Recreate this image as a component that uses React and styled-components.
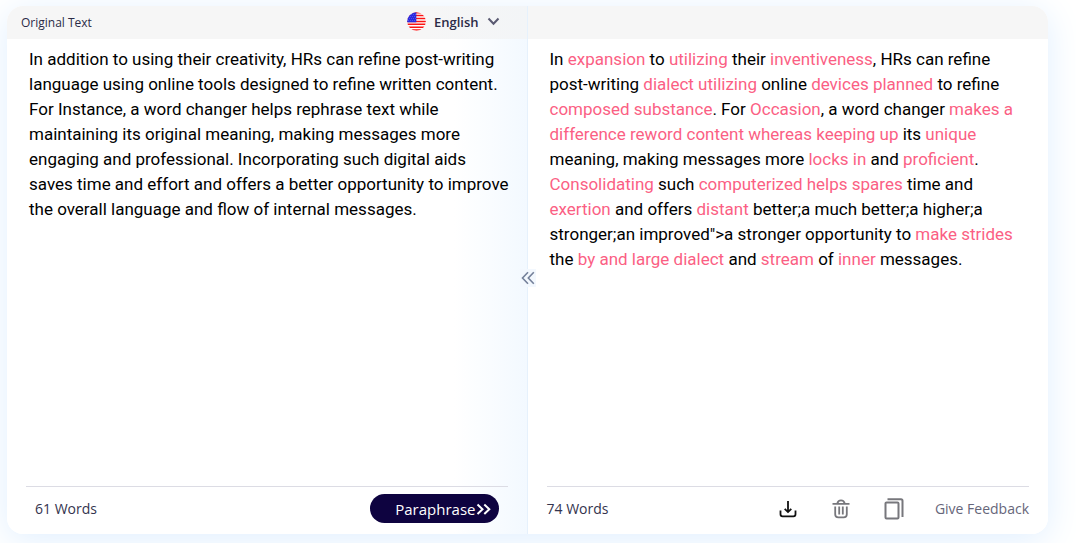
import React from "react";
import styled, { createGlobalStyle } from "styled-components";

const GlobalStyle = createGlobalStyle`
  *, *::before, *::after { box-sizing: border-box; }
  body {
    margin: 0;
    background: #fff;
    color: #1f1f3d;
    font-family: "Segoe UI", "Open Sans", sans-serif;
  }
`;

const Page = styled.main`
  display: flex;
  min-height: 100vh;
  padding: 6px 28px 9px 7px;
  overflow: hidden;
`;

const Card = styled.div`
  position: relative;
  display: grid;
  grid-template-columns: 1fr 1fr;
  flex: 1;
  border-radius: 16px;
  background: #fff;
  box-shadow: 0 6px 36px #e0efff;
`;

const Panel = styled.section`
  display: flex;
  flex-direction: column;
  min-width: 0;
  overflow: hidden;
  border-radius: ${(p) => (p.$side === "left" ? "16px 0 0 16px" : "0 16px 16px 0")};
  border-right: ${(p) => (p.$side === "left" ? "1px solid #e6f1fc" : "0")};
  background: ${(p) =>
    p.$side === "left"
      ? "linear-gradient(to right, #fff 86%, #f3f9ff 100%)"
      : "#fff"};
`;

const Header = styled.header`
  display: flex;
  align-items: center;
  justify-content: space-between;
  height: 33px;
  padding: 0 27px 0 14px;
  background: ${(p) =>
    p.$side === "left"
      ? "linear-gradient(to right, #f6f6f6 80%, #f3f5f7 100%)"
      : "#f6f6f6"};
  font-size: 13px;
`;

const Title = styled.label`
  color: #2b2b47;
  font-size: 12px;
`;

const LanguageButton = styled.button`
  display: flex;
  align-items: center;
  margin-top: -2px;
  padding: 0;
  border: 0;
  background: none;
  color: #2b2b47;
  font: 600 13px "Segoe UI", "Open Sans", sans-serif;
  cursor: pointer;
`;

const LanguageName = styled.span`
  margin: 0 8px;
`;

const SourceText = styled.textarea`
  flex: 1;
  width: 100%;
  padding: 8px 14px 0 22px;
  border: 0;
  outline: 0;
  resize: none;
  background: transparent;
  color: #000;
  font: 17px/25px Roboto, sans-serif;
`;

const ResultText = styled.p`
  flex: 1;
  margin: 0;
  padding: 8px 32px 0 22px;
  color: #000;
  font: 17px/25px Roboto, sans-serif;
`;

const Changed = styled.span`
  color: #fb5f84;
`;

const Footer = styled.footer`
  display: flex;
  align-items: center;
  justify-content: space-between;
  height: 48px;
  margin: 0 19px;
  padding: ${(p) => (p.$side === "left" ? "0 9px 4px" : "0 0 4px")};
  border-top: 1px solid #dcdce4;
`;

const WordCount = styled.span`
  color: #34344e;
  font-size: 14px;
`;

const ParaphraseButton = styled.button`
  display: flex;
  align-items: center;
  justify-content: flex-end;
  width: 129px;
  height: 29px;
  padding: 0 8px 0 0;
  border: 0;
  border-radius: 15px;
  background: #0e0340;
  color: #fff;
  font: 15px "Segoe UI", "Open Sans", sans-serif;
  cursor: pointer;
`;

const Actions = styled.div`
  display: flex;
  align-items: center;
  gap: 29px;
`;

const IconButton = styled.button`
  display: grid;
  place-items: center;
  width: 24px;
  height: 24px;
  padding: 0;
  border: 0;
  background: none;
  color: ${(p) => p.$color};
  cursor: pointer;
`;

const FeedbackLink = styled.a`
  color: #66667a;
  font-size: 14px;
  text-decoration: none;
`;

const CollapseButton = styled.button`
  position: absolute;
  top: calc(50% + 8px);
  left: 50%;
  display: grid;
  place-items: center;
  width: 16px;
  height: 18px;
  padding: 0;
  border: 0;
  background: #f3f8fe;
  color: #74809a;
  transform: translate(-50%, -50%);
  cursor: pointer;
`;

const Flag = () => (
  <svg width="19" height="19" viewBox="0 0 19 19" aria-hidden="true">
    <defs>
      <clipPath id="flag-circle">
        <circle cx="9.5" cy="9.5" r="9.3" />
      </clipPath>
    </defs>
    <g clipPath="url(#flag-circle)">
      <rect width="19" height="19" fill="#fff" />
      <path
        d="M0 .7h19M0 3.6h19M0 6.5h19M0 9.4h19M0 12.3h19M0 15.2h19M0 18.1h19"
        stroke="#fb1414"
        strokeWidth="1.5"
      />
      <rect width="9.3" height="10.3" fill="#2929df" />
      <path
        d="M2 2.5h7M1 4.5h8M2 6.5h7M1 8.5h8"
        stroke="#7272ee"
        strokeWidth=".7"
        strokeDasharray=".8 1.2"
      />
    </g>
  </svg>
);

const Chevron = () => (
  <svg width="13" height="9" viewBox="0 0 13 9" fill="none" aria-hidden="true">
    <path d="M1.5 1.5 6.5 6.7l5-5.2" stroke="#5a5a72" strokeWidth="2" />
  </svg>
);

const DoubleRight = () => (
  <svg width="15" height="12" viewBox="0 0 15 12" fill="none" aria-hidden="true">
    <path
      d="m1.5 1.5 5 4.7-5 4.7M8.3 1.5l5 4.7-5 4.7"
      stroke="currentColor"
      strokeWidth="2"
    />
  </svg>
);

const DoubleLeft = () => (
  <svg width="14" height="14" viewBox="0 0 14 14" fill="none" aria-hidden="true">
    <path
      d="M7 1.2 1.5 7 7 12.8M12.8 1.2 7.3 7l5.5 5.8"
      stroke="currentColor"
      strokeWidth="1.6"
    />
  </svg>
);

const Download = () => (
  <svg width="18" height="18" viewBox="0 0 18 18" fill="none" aria-hidden="true">
    <path
      d="M9 1v11M5.7 8.8 9 12.1l3.3-3.3M1.5 10.5v3.8a2 2 0 0 0 2 2h11a2 2 0 0 0 2-2v-3.8"
      stroke="currentColor"
      strokeWidth="1.8"
    />
  </svg>
);

const Trash = () => (
  <svg width="18" height="20" viewBox="0 0 18 20" fill="none" aria-hidden="true">
    <path
      d="M.5 4.9h17M5.3 4.5C5.7 2.6 7 1.3 9 1.3s3.3 1.3 3.7 3.2M3.2 7.5v7.7a3.2 3.2 0 0 0 3.2 3.2h5.2a3.2 3.2 0 0 0 3.2-3.2V7.5M7.2 7.5v8M10.8 7.5v8"
      stroke="currentColor"
      strokeWidth="1.8"
    />
  </svg>
);

const Copy = () => (
  <svg width="20" height="22" viewBox="0 0 20 22" fill="none" aria-hidden="true">
    <path
      d="M2.5 4.5h11a1 1 0 0 1 1 1v14a1 1 0 0 1-1 1h-11a1 1 0 0 1-1-1v-14a1 1 0 0 1 1-1Z"
      stroke="currentColor"
      strokeWidth="2"
    />
    <path
      d="M3.5 1.3H17a1.5 1.5 0 0 1 1.5 1.500V19"
      stroke="currentColor"
      strokeWidth="2"
    />
  </svg>
);

const source =
  "In addition to using their creativity, HRs can refine post-writing language using online tools designed to refine written content. For Instance, a word changer helps rephrase text while maintaining its original meaning, making messages more engaging and professional. Incorporating such digital aids saves time and effort and offers a better opportunity to improve the overall language and flow of internal messages.";

export default function App() {
  return (
    <>
      <GlobalStyle />
      <Page>
        <Card>
          <Panel $side="left">
            <Header $side="left">
              <Title htmlFor="source-text">Original Text</Title>
              <LanguageButton type="button">
                <Flag />
                <LanguageName>English</LanguageName>
                <Chevron />
              </LanguageButton>
            </Header>
            <SourceText id="source-text" spellCheck={false} defaultValue={source} />
            <Footer $side="left">
              <WordCount>61 Words</WordCount>
              <ParaphraseButton type="button">
                Paraphrase
                <DoubleRight />
              </ParaphraseButton>
            </Footer>
          </Panel>
          <Panel $side="right">
            <Header $side="right" />
            <ResultText>
              In <Changed>expansion</Changed> to <Changed>utilizing</Changed> their{" "}
              <Changed>inventiveness</Changed>, HRs can refine post-writing{" "}
              <Changed>dialect utilizing</Changed> online <Changed>devices planned</Changed> to
              refine <Changed>composed substance</Changed>. For <Changed>Occasion</Changed>, a word
              changer <Changed>makes a difference reword content whereas keeping up</Changed> its{" "}
              <Changed>unique</Changed> meaning, making messages more <Changed>locks in</Changed>{" "}
              and <Changed>proficient</Changed>. <Changed>Consolidating</Changed> such{" "}
              <Changed>computerized helps spares</Changed> time and <Changed>exertion</Changed> and
              offers <Changed>distant</Changed> better;a much better;a higher;a stronger;an
              improved"&gt;a stronger opportunity to <Changed>make strides</Changed> the{" "}
              <Changed>by and large dialect</Changed> and <Changed>stream</Changed> of{" "}
              <Changed>inner</Changed> messages.
            </ResultText>
            <Footer $side="right">
              <WordCount>74 Words</WordCount>
              <Actions>
                <IconButton type="button" aria-label="Download" $color="#111">
                  <Download />
                </IconButton>
                <IconButton type="button" aria-label="Delete" $color="#77777c">
                  <Trash />
                </IconButton>
                <IconButton type="button" aria-label="Copy" $color="#77777c">
                  <Copy />
                </IconButton>
                <FeedbackLink href="#feedback">Give Feedback</FeedbackLink>
              </Actions>
            </Footer>
          </Panel>
          <CollapseButton type="button" aria-label="Collapse panel">
            <DoubleLeft />
          </CollapseButton>
        </Card>
      </Page>
    </>
  );
}
